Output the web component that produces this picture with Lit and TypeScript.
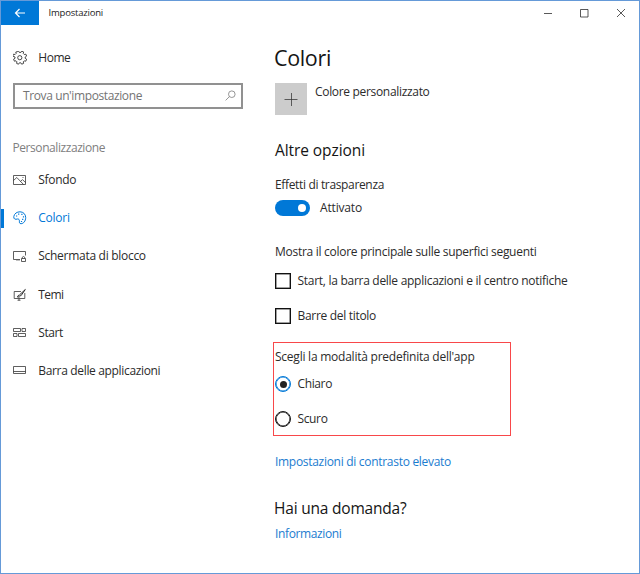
import { LitElement, html, css, svg } from "lit";

/** A single line of text whose tracking is adjusted so that it spans `span` pixels. */
class FitText extends LitElement {
  static properties = { text: {}, span: { type: Number } };
  declare text: string;
  declare span: number;
  static styles = css`
    :host { display: block; white-space: pre; flex: none; }
    .t { display: inline-block; }
  `;
  render() {
    return html`<span class="t">${this.text}</span>`;
  }
  updated() {
    const el = this.renderRoot.querySelector<HTMLElement>(".t")!;
    el.style.letterSpacing = "0px";
    const natural = el.getBoundingClientRect().width;
    el.style.letterSpacing = `${(this.span - natural) / this.text.length}px`;
  }
}
customElements.define("fit-text", FitText);

const fit = (text: string, span: number) => html`<fit-text .text=${text} .span=${span}></fit-text>`;

const icons = {
  gear: svg`<path d="M5.600 1.200 7 .6 7.800 2h1.400L10 .6l2 .8-.3 1.600 1 1 1.600-.3.7 1.900-1.400.9v1.300l1.400.9-.8 2-1.600-.3-.9.9.3 1.600-1.900.8-.9-1.400H7.800l-.9 1.400-1.900-.8.3-1.600-.9-1-1.600.4-.8-2 1.400-.9V6.500L1.100 5.600l.8-1.900 1.600.3 1-1-.3-1.500z" transform="translate(-1.400 -.5)"/><circle cx="6.800" cy="6.700" r="2.100"/>`,
  picture: svg`<path d="M.5 2.500h12v9H.5zM.5 7.500l3.300-3 6.700 7M7.500 8.400l2-1.800 3 3"/><path d="M9.500 4.500h1"/>`,
  palette: svg`<path d="M.8 5.500C1.300 2.500 4 .8 7 .8c3.300 0 5.700 2.500 5.700 5.700 0 3.500-2.200 6.200-4.700 6.200-1.600 0-1.700-1.200-1.600-2.500.1-1.500-.7-2.500-2-2.200C2.500 8.600.4 8.300.8 5.500z" stroke-width="1"/><path d="M3 5h1.200M5.100 3.100h1.200M8.300 3.400h1.200M9.900 5.900h1.200M9.100 8.400h1.200M7.900 10.500h1.200" stroke-width="1.200"/>`,
  lock: svg`<path d="M7 10.500H.5v-8h12v4"/><path d="M3 11.500h4" opacity=".4"/><path d="M8.500 9.500h4v3h-4zM9.300 9.500V8.200q1.200-1.500 2.400 0v1.300"/>`,
  brush: svg`<path d="M8 3.500H1.200v7h10.600V5M6 10.500v2M4.500 12.200h3"/><path d="M12.300 1.500 6.800 6.600M12.300 1.500 8 7.700M6.500 6.900q-1.600.3-2 2.200 2.300.3 3-1.200z" stroke-width="1"/>`,
  tiles: svg`<path d="M.5 2.500h7v3h-7zM9 2.500h3.500v3H9zM.5 7.500H4v3H.5zM5.500 7.500h7v3h-7z"/>`,
  taskbar: svg`<path d="M.5 2.500h12v7H.5zM.5 7.500h12"/>`,
};

const nav = [
  { label: "Sfondo", span: 38, icon: icons.picture },
  { label: "Colori", span: 31.5, icon: icons.palette, active: true },
  { label: "Schermata di blocco", span: 107.5, icon: icons.lock },
  { label: "Temi", span: 25, icon: icons.brush },
  { label: "Start", span: 24.5, icon: icons.tiles },
  { label: "Barra delle applicazioni", span: 122, icon: icons.taskbar },
];

class AppRoot extends LitElement {
  static styles = css`
    :host { display: block; width: 640px; height: 574px; }
    * { box-sizing: border-box; }
    svg { fill: none; stroke: currentColor; stroke-width: 0.75; display: block; flex: none; }
    .window { height: 574px; border: 1px solid #659ad8; background: #fff; color: #2b2b2b;
      font: 12px/16px "Open Sans", "Noto Sans", sans-serif; }
    .bar { display: flex; height: 24px; align-items: center; font-size: 9.5px; color: #222; }
    .back { width: 38px; height: 24px; background: #0078d7; color: #fff; margin-right: 9.5px; display: grid; place-items: center; }
    .back svg { stroke-width: 1.2; }
    .controls { display: flex; gap: 26.7px; margin-left: auto; margin-right: 13px; }
    .body { display: grid; grid-template-columns: 274px 1fr; }
    .home, .item { display: flex; align-items: center; padding-left: 12px; }
    .home svg, .item svg { margin-right: 11.3px; }
    .home { height: 28px; margin-top: 19px; }
    .home svg { stroke-width: 0.85; }
    .search { display: flex; align-items: center; justify-content: space-between; width: 230px; height: 26px; margin: 11px 0 0 12px; padding: 0 5px 1px 8px; border: 2px solid #919191; color: #747474; }
    .group { margin: 30.6px 0 5px 11.5px; color: #808080; }
    .item { height: 38.33px; }
    .item.active { color: #0078d7; background: linear-gradient(#0078d7, #0078d7) 0 50% / 3px 19px no-repeat; }
    h1, h2 { margin: 0; font-weight: 400; color: #151515; }
    h1 { font-size: 21.5px; line-height: 32px; margin-top: 17px; margin-left: -1px; }
    h2 { font-size: 15.5px; line-height: 20px; }
    .custom { display: flex; gap: 8px; margin-top: 9px; }
    .custom fit-text { margin-top: 1px; }
    .plus { width: 32px; height: 32px; background: #ccc; display: grid; place-items: center; color: #333; }
    .more { margin-top: 25px; }
    .effects { margin-top: 17px; }
    .switch { display: flex; align-items: center; gap: 10px; margin-top: 7px; }
    .track { width: 35px; height: 16px; border-radius: 8px; background: #0078d7; display: flex; align-items: center; justify-content: flex-end; padding-right: 4px; }
    .thumb { width: 8px; height: 8px; border-radius: 50%; background: #fff; }
    .surfaces { margin-top: 28px; }
    .choice { display: flex; align-items: center; gap: 6.5px; height: 16px; }
    .check { width: 16px; height: 16px; border: 1px solid #111; box-shadow: inset 0 0 0 .5px #444; }
    .radio { width: 16px; height: 16px; border-radius: 50%; border: 1px solid #151515; box-shadow: inset 0 0 0 .6px #151515; display: grid; place-items: center; }
    .radio.on { border-color: #0078d7; box-shadow: inset 0 0 0 .6px #0078d7; }
    .radio.on::after { content: ""; width: 7px; height: 7px; border-radius: 50%; background: #222; }
    .c1 { margin-top: 13px; }
    .gap { margin-top: 19px; }
    .marked { margin: 18px 0 0 -2px; width: 238px; height: 94px; border: 1px solid #f8484a; padding: 6px 0 0 1px; }
    .marked .first { margin-top: 11px; }
    .link { color: #1b7ccf; }
    .contrast { margin-top: 18px; }
    .question { margin: 28px 0 0 -1px; }
    .info { margin-top: 8px; }
  `;

  icon(content: unknown) {
    return html`<svg width="14" height="14" viewBox="0 0 14 14">${content}</svg>`;
  }

  render() {
    return html`
      <div class="window">
        <header class="bar">
          <div class="back"><svg width="12" height="10" viewBox="0 0 12 10"><path d="M11 5H1.500M5.500 1l-4 4 4 4" /></svg></div>
          ${fit("Impostazioni", 54.5)}
          <div class="controls">
            <svg width="10" height="10" viewBox="0 0 10 10"><path d="M1 5.500h8" /></svg>
            <svg width="10" height="10" viewBox="0 0 10 10"><path d="M1.500 1.500h7.500v7.500H1.500z" /></svg>
            <svg width="10" height="10" viewBox="0 0 10 10"><path d="m1 1 8 8M9 1 1 9" /></svg>
          </div>
        </header>
        <div class="body">
          <nav>
            <div class="home">${this.icon(icons.gear)}${fit("Home", 32)}</div>
            <div class="search">
              ${fit("Trova un'impostazione", 119)}
              <svg width="11" height="11" viewBox="0 0 11 11"><circle cx="6.800" cy="4.200" r="3.300" /><path d="M4.400 6.600.6 10.400" /></svg>
            </div>
            <div class="group">${fit("Personalizzazione", 92.5)}</div>
            ${nav.map((n) => html`<div class="item ${n.active ? "active" : ""}">${this.icon(n.icon)}${fit(n.label, n.span)}</div>`)}
          </nav>
          <main>
            <h1>${fit("Colori", 57)}</h1>
            <div class="custom">
              <div class="plus"><svg width="14" height="14" viewBox="0 0 14 14"><path d="M.5 7.500h13M7.500 1v13" /></svg></div>
              ${fit("Colore personalizzato", 114.5)}
            </div>
            <h2 class="more">${fit("Altre opzioni", 90)}</h2>
            <div class="effects">${fit("Effetti di trasparenza", 109)}</div>
            <div class="switch"><div class="track"><div class="thumb"></div></div>${fit("Attivato", 42)}</div>
            <div class="surfaces">${fit("Mostra il colore principale sulle superfici seguenti", 261.5)}</div>
            <div class="choice c1"><span class="check"></span>${fit("Start, la barra delle applicazioni e il centro notifiche", 270)}</div>
            <div class="choice gap"><span class="check"></span>${fit("Barre del titolo", 78.5)}</div>
            <section class="marked">
              ${fit("Scegli la modalità predefinita dell'app", 199.5)}
              <div class="choice first"><span class="radio on"></span>${fit("Chiaro", 34.5)}</div>
              <div class="choice gap"><span class="radio"></span>${fit("Scuro", 30)}</div>
            </section>
            <div class="link contrast">${fit("Impostazioni di contrasto elevato", 176)}</div>
            <h2 class="question">${fit("Hai una domanda?", 132.5)}</h2>
            <div class="link info">${fit("Informazioni", 66.5)}</div>
          </main>
        </div>
      </div>
    `;
  }
}
customElements.define("app-root", AppRoot);
